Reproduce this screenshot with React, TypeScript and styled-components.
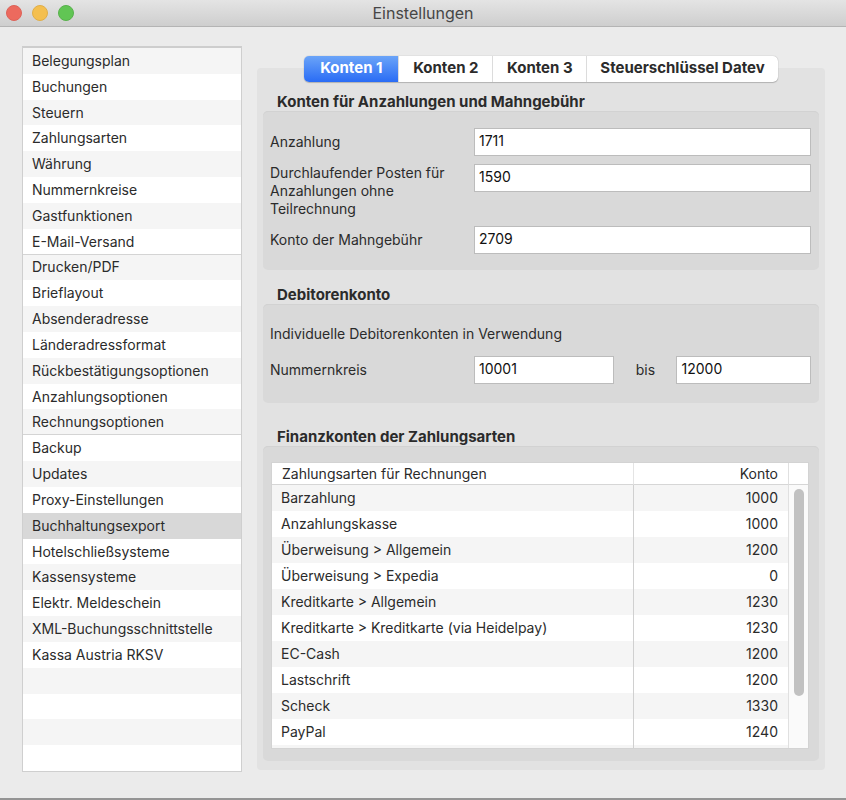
import React, { useState } from "react";
import styled, { createGlobalStyle, css } from "styled-components";

const GlobalStyle = createGlobalStyle`
  *, *::before, *::after { box-sizing: border-box; }
  body {
    margin: 0;
    background: #ebebeb;
    color: #2b2b2b;
    font-family: Inter, "Liberation Sans", sans-serif;
    font-size: 14px;
    line-height: 18px;
  }
  button, input { font: inherit; color: inherit; }
`;

const Window = styled.div`
  display: flex;
  flex-direction: column;
  min-height: 100vh;
  background: #ebebeb;
  border-bottom: 2px solid #949494;
`;

const TitleBar = styled.header`
  display: grid;
  grid-template-columns: 1fr auto 1fr;
  align-items: center;
  height: 27px;
  padding: 0 6px;
  background: linear-gradient(#e4e4e4, #cecece);
  border-bottom: 1px solid #b4b4b4;
`;

const WindowButtons = styled.div`
  display: flex;
  gap: 10px;
`;

const WindowButton = styled.button<{ $fill: string; $rim: string }>`
  width: 16px;
  height: 16px;
  padding: 0;
  border: 1px solid ${(p) => p.$rim};
  border-radius: 50%;
  background: ${(p) => p.$fill};
`;

const Title = styled.h1`
  margin: 0;
  font-size: 16px;
  font-weight: 400;
  line-height: 20px;
  color: #464646;
`;

const Content = styled.div`
  flex: 1;
  display: flex;
  gap: 15px;
  padding: 19px 21px 26px 22px;
`;

const Sidebar = styled.nav`
  display: flex;
  flex: 0 0 220px;
`;

const SidebarList = styled.ul`
  flex: 1;
  display: grid;
  grid-auto-rows: minmax(24px, 1fr);
  margin: 0;
  padding: 0;
  list-style: none;
  background: #fff;
  border: 1px solid #cfcfcf;
  border-top: 2px solid #cdcdcd;
`;

const SidebarItem = styled.li<{ $selected?: boolean; $divided?: boolean }>`
  display: flex;
  background: #fff;
  &:nth-child(odd) { background: #f5f5f5; }
  ${(p) => p.$divided && css`box-shadow: 0 -1px #d4d4d4;`}
  ${(p) => p.$selected && css`&& { background: #d8d8d8; }`}
`;

const SidebarLink = styled.a`
  flex: 1;
  display: flex;
  align-items: center;
  padding-left: 9px;
  color: inherit;
  text-decoration: none;
`;

const Main = styled.main`
  flex: 1;
  display: flex;
  flex-direction: column;
  padding: 10px 0 2px;
`;

const Tabs = styled.div`
  position: relative;
  z-index: 1;
  display: flex;
  align-self: center;
  height: 26px;
  margin-bottom: -14px;
  background: #fff;
  border-radius: 5px;
  box-shadow: 0 0 1px rgba(0, 0, 0, 0.35), 0 1px 1px rgba(0, 0, 0, 0.18);
  overflow: hidden;
`;

const Tab = styled.button<{ $active: boolean }>`
  padding: 0 13px 3px;
  min-width: 94px;
  border: 0;
  border-left: 1px solid #dcdcdc;
  background: transparent;
  font-size: 15px;
  font-weight: 700;
  white-space: nowrap;
  &:first-child { border-left: 0; }
  ${(p) =>
    p.$active &&
    css`
      color: #fff;
      background: linear-gradient(#6ba4f8, #2a6cf5);
    `}
`;

const Panel = styled.div`
  flex: 1;
  display: flex;
  flex-direction: column;
  padding: 25px 6px 9px;
  background: #e2e2e2;
  border-radius: 4px;
`;

const Section = styled.section<{ $before?: number; $grow?: boolean }>`
  display: flex;
  flex-direction: column;
  margin-top: ${(p) => p.$before ?? 0}px;
  ${(p) => p.$grow && css`flex: 1;`}
`;

const SectionTitle = styled.h2`
  margin: 0 0 0 14px;
  font-size: 15px;
  font-weight: 700;
  line-height: 18px;
`;

const Group = styled.div<{ $grow?: boolean }>`
  display: flex;
  flex-direction: column;
  padding: 17px 8px 16px 7px;
  background: #d9d9d9;
  border-radius: 5px;
  box-shadow: inset 0 1px #d2d2d2;
  ${(p) => p.$grow && css`flex: 1; padding: 17px 11px 13px 9px;`}
`;

const Fields = styled.div`
  display: grid;
  grid-template-columns: 204px 1fr;
  row-gap: 8px;
  align-items: start;
`;

const FieldLabel = styled.label`
  padding-right: 16px;
  align-self: center;
`;

const TextInput = styled.input`
  width: 100%;
  min-width: 0;
  height: 28px;
  padding: 0 4px 4px;
  border: 1px solid #bcbcbc;
  border-radius: 0;
  background: #fff;
  color: #111;
  outline: none;
`;

const Note = styled.p`
  margin: 4px 0 13px;
`;

const RangeRow = styled.div`
  display: grid;
  grid-template-columns: 204px 141fr 62px 135fr;
  align-items: center;
  margin-bottom: 3px;
`;

const RangeWord = styled.label`
  text-align: center;
`;

const TableBox = styled.div`
  flex: 1 1 240px;
  display: grid;
  grid-template-columns: 1fr 20px;
  grid-template-rows: 100%;
  height: 0;
  min-height: 240px;
  overflow: hidden;
  background: #fff;
  box-shadow: 0 0 0 1px #d3d3d3;
`;

const TableClip = styled.div`
  overflow: hidden;
`;

const Table = styled.table`
  width: 100%;
  border-collapse: separate;
  border-spacing: 0;
  table-layout: fixed;
`;

const HeadCell = styled.th<{ $end?: boolean }>`
  width: ${(p) => (p.$end ? "30%" : "70%")};
  height: 22px;
  padding: 0 10px;
  font-weight: 400;
  text-align: ${(p) => (p.$end ? "right" : "left")};
  border-bottom: 1px solid #d6d6d6;
  ${(p) => p.$end && css`border-left: 1px solid #e4e4e4;`}
`;

const Row = styled.tr`
  &:nth-child(odd) { background: #f5f5f5; }
`;

const Cell = styled.td<{ $end?: boolean }>`
  height: 26px;
  padding: 0 9px 1px;
  ${(p) =>
    p.$end &&
    css`
      padding-right: 10px;
      text-align: right;
      border-left: 1px solid #d0d0d0;
    `}
`;

const ScrollColumn = styled.div`
  display: flex;
  flex-direction: column;
`;

const ScrollHead = styled.div`
  height: 22px;
  border-bottom: 1px solid #d6d6d6;
  border-left: 1px solid #e0e0e0;
`;

const ScrollTrack = styled.div`
  flex: 1;
  padding: 4px 4px 0 5px;
  background: #fafafa;
  border-left: 1px solid #e0e0e0;
`;

const ScrollThumb = styled.div`
  height: 80%;
  border-radius: 5px;
  background: #c1c1c1;
`;

const sidebarItems = [
  "Belegungsplan", "Buchungen", "Steuern", "Zahlungsarten", "Währung",
  "Nummernkreise", "Gastfunktionen", "E-Mail-Versand", "Drucken/PDF",
  "Brieflayout", "Absenderadresse", "Länderadressformat",
  "Rückbestätigungsoptionen", "Anzahlungsoptionen", "Rechnungsoptionen",
  "Backup", "Updates", "Proxy-Einstellungen", "Buchhaltungsexport",
  "Hotelschließsysteme", "Kassensysteme", "Elektr. Meldeschein",
  "XML-Buchungsschnittstelle", "Kassa Austria RKSV",
];
const dividedItems = ["Drucken/PDF", "Backup"];
const emptyRows = [0, 1, 2, 3];

const tabs = ["Konten 1", "Konten 2", "Konten 3", "Steuerschlüssel Datev"];

const accounts: [string, string][] = [
  ["Barzahlung", "1000"],
  ["Anzahlungskasse", "1000"],
  ["Überweisung > Allgemein", "1200"],
  ["Überweisung > Expedia", "0"],
  ["Kreditkarte > Allgemein", "1230"],
  ["Kreditkarte > Kreditkarte (via Heidelpay)", "1230"],
  ["EC-Cash", "1200"],
  ["Lastschrift", "1200"],
  ["Scheck", "1330"],
  ["PayPal", "1240"],
  ["", ""],
];

export default function App() {
  const [selected, setSelected] = useState("Buchhaltungsexport");
  const [activeTab, setActiveTab] = useState(tabs[0]);

  return (
    <>
      <GlobalStyle />
      <Window>
        <TitleBar>
          <WindowButtons>
            <WindowButton aria-label="Schließen" $fill="#ec6a5e" $rim="#dd6258" />
            <WindowButton aria-label="Minimieren" $fill="#f4bf4f" $rim="#e0ae48" />
            <WindowButton aria-label="Vergrößern" $fill="#61c554" $rim="#58b14c" />
          </WindowButtons>
          <Title>Einstellungen</Title>
        </TitleBar>
        <Content>
          <Sidebar aria-label="Einstellungen">
            <SidebarList>
              {sidebarItems.map((item) => (
                <SidebarItem
                  key={item}
                  $selected={item === selected}
                  $divided={dividedItems.includes(item)}
                >
                  <SidebarLink
                    href="#"
                    aria-current={item === selected ? "page" : undefined}
                    onClick={(e) => {
                      e.preventDefault();
                      setSelected(item);
                    }}
                  >
                    {item}
                  </SidebarLink>
                </SidebarItem>
              ))}
              {emptyRows.map((n) => (
                <SidebarItem key={n} aria-hidden="true" />
              ))}
            </SidebarList>
          </Sidebar>
          <Main>
            <Tabs role="tablist">
              {tabs.map((tab) => (
                <Tab
                  key={tab}
                  role="tab"
                  aria-selected={tab === activeTab}
                  $active={tab === activeTab}
                  onClick={() => setActiveTab(tab)}
                >
                  {tab}
                </Tab>
              ))}
            </Tabs>
            <Panel role="tabpanel">
              <Section>
                <SectionTitle>Konten für Anzahlungen und Mahngebühr</SectionTitle>
                <Group>
                  <Fields>
                    <FieldLabel htmlFor="anzahlung">Anzahlung</FieldLabel>
                    <TextInput id="anzahlung" defaultValue="1711" />
                    <FieldLabel htmlFor="posten">
                      Durchlaufender Posten für Anzahlungen ohne Teilrechnung
                    </FieldLabel>
                    <TextInput id="posten" defaultValue="1590" />
                    <FieldLabel htmlFor="mahn">Konto der Mahngebühr</FieldLabel>
                    <TextInput id="mahn" defaultValue="2709" />
                  </Fields>
                </Group>
              </Section>
              <Section $before={16}>
                <SectionTitle>Debitorenkonto</SectionTitle>
                <Group>
                  <Note>Individuelle Debitorenkonten in Verwendung</Note>
                  <RangeRow>
                    <FieldLabel htmlFor="von">Nummernkreis</FieldLabel>
                    <TextInput id="von" defaultValue="10001" />
                    <RangeWord htmlFor="bis">bis</RangeWord>
                    <TextInput id="bis" defaultValue="12000" />
                  </RangeRow>
                </Group>
              </Section>
              <Section $before={25} $grow>
                <SectionTitle>Finanzkonten der Zahlungsarten</SectionTitle>
                <Group $grow>
                  <TableBox>
                    <TableClip>
                      <Table>
                        <thead>
                          <tr>
                            <HeadCell scope="col">Zahlungsarten für Rechnungen</HeadCell>
                            <HeadCell scope="col" $end>Konto</HeadCell>
                          </tr>
                        </thead>
                        <tbody>
                          {accounts.map(([name, account]) => (
                            <Row key={name}>
                              <Cell>{name}</Cell>
                              <Cell $end>{account}</Cell>
                            </Row>
                          ))}
                        </tbody>
                      </Table>
                    </TableClip>
                    <ScrollColumn aria-hidden="true">
                      <ScrollHead />
                      <ScrollTrack>
                        <ScrollThumb />
                      </ScrollTrack>
                    </ScrollColumn>
                  </TableBox>
                </Group>
              </Section>
            </Panel>
          </Main>
        </Content>
      </Window>
    </>
  );
}
